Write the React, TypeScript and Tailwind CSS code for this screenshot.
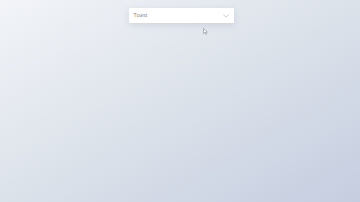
export default function App() {
  return (
    <div
      className="relative flex min-h-[202px] w-full flex-col items-center bg-gradient-to-br from-[#f2f4f8] via-[#dce2ea] to-[#c5cde0] pt-2"
      style={{ fontFamily: '"Open Sans", "Liberation Sans", sans-serif' }}
    >
      <button className="ml-[2px] flex h-[15px] w-[105px] items-center justify-between bg-white pl-[5px] pr-[5px] shadow-[0_2px_6px_rgba(100,115,140,0.18)]">
        <span className="text-[5.5px] leading-none text-[#7a7f88]">Toast</span>
        <svg width="6" height="4" viewBox="0 0 7 4" className="text-[#b0b4bc]">
          <path d="M0.5 0.5 L3.5 3.3 L6.5 0.5" fill="none" stroke="currentColor" strokeWidth="0.8" />
        </svg>
      </button>
      <svg
        width="5"
        height="7"
        viewBox="0 0 10 14"
        className="absolute left-[203px] top-[28px]"
      >
        <path d="M1 1 L1 11 L3.5 8.8 L5.5 13 L7 12.3 L5.2 8.3 L8.6 8.3 Z" fill="#fff" stroke="#707580" strokeWidth="1" />
      </svg>
    </div>
  );
}
